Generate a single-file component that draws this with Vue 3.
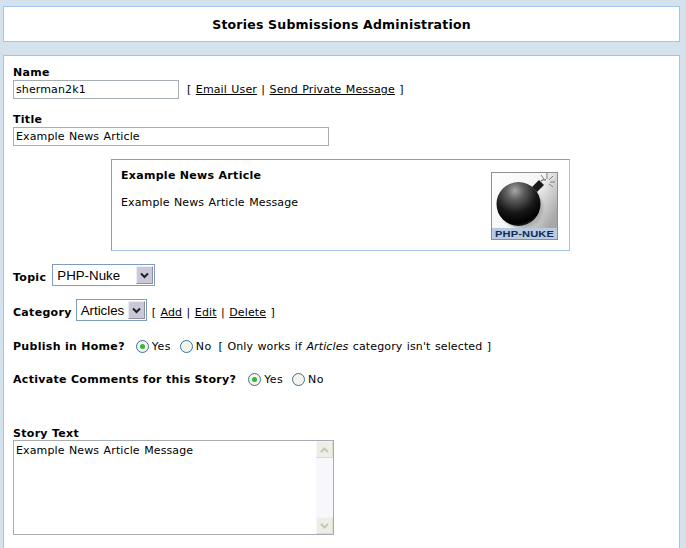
<script setup>
const rays = [
  [56, 7, 56, 1],
  [58, 8, 62, 4],
  [59, 10, 64, 10],
  [58, 12, 62, 15],
  [53, 7, 50, 3],
]
</script>

<template>
  <div class="page">
    <div class="box head"><b>Stories Submissions Administration</b></div>
    <div class="box main">
      <div class="label first">Name</div>
      <div class="row">
        <input class="field name" value="sherman2k1" />
        <span class="links">[ <a>Email User</a> | <a>Send Private Message</a> ]</span>
      </div>
      <div class="label title-label">Title</div>
      <input class="field title" value="Example News Article" />

      <div class="preview">
        <div class="preview-text">
          <div class="preview-title">Example News Article</div>
          <div class="preview-body">Example News Article Message</div>
        </div>
        <svg class="logo" width="67" height="68" viewBox="0 0 67 68">
          <defs>
            <radialGradient id="ball" cx="0.42" cy="0.2" r="0.9">
              <stop offset="0" stop-color="#a8a8a8" />
              <stop offset="0.22" stop-color="#606060" />
              <stop offset="0.55" stop-color="#181818" />
              <stop offset="0.82" stop-color="#000" />
              <stop offset="1" stop-color="#484848" />
            </radialGradient>
            <linearGradient id="bg" x1="0" y1="0" x2="1" y2="0.6">
              <stop offset="0" stop-color="#ffffff" />
              <stop offset="0.6" stop-color="#f4f4f4" />
              <stop offset="1" stop-color="#a8a8a8" />
            </linearGradient>
            <filter id="blur"><feGaussianBlur stdDeviation="1.6" /></filter>
          </defs>
          <rect x="0.5" y="0.5" width="66" height="67" fill="url(#bg)" stroke="#8e8e8e" />
          <circle cx="31" cy="36" r="21" fill="#999" opacity="0.6" filter="url(#blur)" />
          <path d="M41 15 L48 8 L53 13 L46 20 Z" fill="#1a1a1a" />
          <path d="M50 9 Q52 7 55 8" fill="none" stroke="#444" stroke-width="1" />
          <path v-for="(r, i) in rays" :key="i" :d="`M${r[0]} ${r[1]} L${r[2]} ${r[3]}`" stroke="#666" stroke-width="0.8" fill="none" />
          <circle cx="27.5" cy="32" r="22" fill="url(#ball)" />
          <rect x="1" y="56" width="65" height="11" fill="#b8cbe0" />
          <text x="4" y="65" textLength="59" lengthAdjust="spacingAndGlyphs" class="logo-text">PHP-NUKE</text>
        </svg>
      </div>

      <div class="line topic">
        <b>Topic</b>
        <div class="select s-topic">PHP-Nuke<span class="arrow"><svg width="9" height="7" viewBox="0 0 9 7"><path d="M1 1.5 L4.5 5 L8 1.5" fill="none" stroke="#222" stroke-width="2" /></svg></span></div>
      </div>
      <div class="line category">
        <b>Category</b>
        <div class="select s-cat">Articles<span class="arrow"><svg width="9" height="7" viewBox="0 0 9 7"><path d="M1 1.5 L4.5 5 L8 1.5" fill="none" stroke="#222" stroke-width="2" /></svg></span></div>
        <span class="cat-links">[ <a>Add</a> | <a>Edit</a> | <a>Delete</a> ]</span>
      </div>
      <div class="line publish">
        <b>Publish in Home?</b>
        <span class="radio on first-radio pub-radio"></span><span class="opt">Yes</span>
        <span class="radio"></span><span class="opt">No</span>
        <span class="note">[ Only works if <i>Articles</i> category isn't selected ]</span>
      </div>
      <div class="line activate">
        <b>Activate Comments for this Story?</b>
        <span class="radio on first-radio"></span><span class="opt">Yes</span>
        <span class="radio"></span><span class="opt">No</span>
      </div>

      <div class="label story">Story Text</div>
      <div class="textarea">
        <div class="ta-text">Example News Article Message</div>
        <div class="scroll">
          <span class="sbtn"><svg width="9" height="6" viewBox="0 0 9 6"><path d="M1 5 L4.5 1.5 L8 5" fill="none" stroke="#c4c8b8" stroke-width="2" /></svg></span>
          <span class="sbtn"><svg width="9" height="6" viewBox="0 0 9 6"><path d="M1 1 L4.5 4.5 L8 1" fill="none" stroke="#c4c8b8" stroke-width="2" /></svg></span>
        </div>
      </div>
    </div>
  </div>
</template>

<style>
html, body { margin: 0; background: #d3e2ec; overflow: hidden; }
</style>

<style scoped>
.page {
  width: 686px;
  height: 548px;
  overflow: hidden;
  padding: 6px 6px 0 3px;
  box-sizing: border-box;
  font-family: "DejaVu Sans", Verdana, sans-serif;
  font-size: 11px;
  letter-spacing: 0.12px;
  word-spacing: 0.8px;
  color: #000;
  background: #d3e2ec;
}
b, .label, .preview-title { letter-spacing: 0.3px; word-spacing: 0; font-weight: bold; }
.box {
  background: #fff;
  border: 1px solid #a4c4e6;
  box-sizing: border-box;
}
.head {
  height: 36px;
  display: flex;
  align-items: center;
  justify-content: center;
  font-size: 12.5px;
  margin-bottom: 13px;
}
.head b { letter-spacing: 0.2px; }
.main {
  height: 540px;
  padding: 10px 9px;
}
.label { line-height: 13px; }
.row { display: flex; align-items: center; margin-top: 1px; }
.field {
  display: block;
  box-sizing: border-box;
  height: 19px;
  border: 1px solid #a5acb2;
  padding: 0 2px;
  font: 11px "DejaVu Sans", Verdana, sans-serif;
  letter-spacing: 0.12px;
  word-spacing: 0.8px;
  color: #000;
  outline: none;
  background: #fff;
}
.name { width: 166px; }
.title { width: 316px; }
.links { margin-left: 8px; }
a { text-decoration: underline; color: #000; }
.title-label { margin-top: 14px; }
.title-label + .field { margin-top: 1px; }
.preview {
  margin: 13px 0 0 98px;
  width: 459px;
  height: 92px;
  box-sizing: border-box;
  border: 1px solid #a4c4e6;
  border-top-color: #9a9a9a;
  border-left-color: #9a9a9a;
  display: flex;
  justify-content: space-between;
  padding: 9px 11px 0 9px;
}
.preview-title { line-height: 13px; }
.preview-body { margin-top: 14px; line-height: 13px; }
.logo { display: block; margin-top: 3px; }
.logo-text {
  font: bold 9px "Liberation Sans", Arial, sans-serif;
  fill: #142c55;
}
.line { display: flex; align-items: center; }
.topic { margin-top: 13px; height: 22px; }
.category { margin-top: 13px; height: 22px; }
.topic b, .category b, .cat-links { padding-top: 4px; }
.publish { margin-top: 17px; height: 16px; }
.activate { margin-top: 17px; height: 16px; }
.select {
  position: relative;
  box-sizing: border-box;
  height: 22px;
  margin-left: 4px;
  border: 1px solid #7f9db9;
  font: 13.3px "Liberation Sans", Arial, sans-serif;
  letter-spacing: 0;
  word-spacing: 0;
  line-height: 21px;
  padding-left: 4px;
  background: #fff;
}
.s-topic { width: 103px; margin-left: 6px; }
.s-cat { width: 71px; }
.arrow {
  position: absolute;
  right: 1px;
  top: 1px;
  width: 17px;
  height: 18px;
  box-sizing: border-box;
  background: #c9c9da;
  border: 1px solid #8f8fa8;
  border-top-color: #eee;
  border-left-color: #eee;
  display: flex;
  align-items: center;
  justify-content: center;
}
.cat-links { margin-left: 5px; }
.radio {
  box-sizing: border-box;
  width: 13px;
  height: 13px;
  border-radius: 50%;
  border: 1px solid #3d6f99;
  background: #f4f4ee;
  margin: 0 3px 0 9px;
  position: relative;
  flex: none;
}
.first-radio { margin-left: 12px; }
.pub-radio { margin-left: 11px; }
.opt { letter-spacing: 0.4px; }
.radio.on::after {
  content: "";
  position: absolute;
  left: 3px;
  top: 3px;
  width: 5px;
  height: 5px;
  border-radius: 50%;
  background: #35b535;
}
.note { margin-left: 7px; }
.story { margin-top: 40px; }
.textarea {
  box-sizing: border-box;
  width: 321px;
  height: 95px;
  border: 1px solid #a5acb2;
  display: flex;
  justify-content: space-between;
}
.ta-text { padding: 3px 2px; line-height: 13px; }
.scroll {
  width: 17px;
  background: #f8f8fc;
  display: flex;
  flex-direction: column;
  justify-content: space-between;
}
.sbtn {
  height: 17px;
  box-sizing: border-box;
  background: #eeeee6;
  border: 1px solid #f6f6f0;
  border-bottom-color: #dcdccf;
  border-right-color: #dcdccf;
  display: flex;
  align-items: center;
  justify-content: center;
}
</style>
